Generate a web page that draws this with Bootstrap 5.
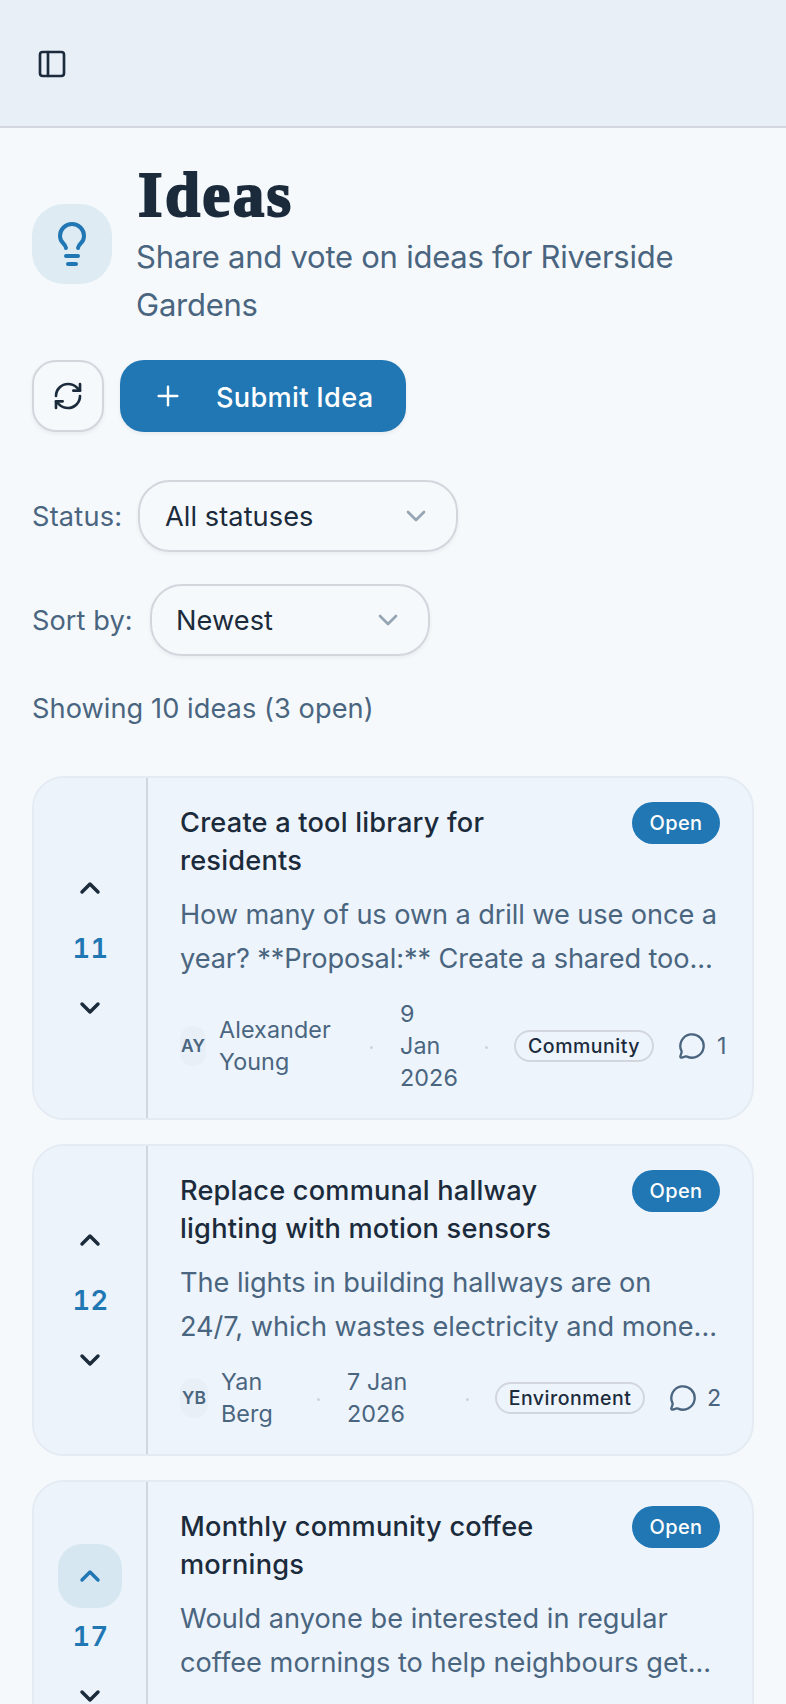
<!DOCTYPE html>
<html lang="en">
<head>
<meta charset="utf-8">
<meta name="viewport" content="width=device-width, initial-scale=1">
<title>Ideas</title>
<link href="https://cdn.jsdelivr.net/npm/bootstrap@5.3.0/dist/css/bootstrap.min.css" rel="stylesheet">
<style>
  :root{--ink:#1b2b3b;--soft:#4a657f;--brand:#2077b4;--line:#d3d6dd}
  html{overflow:hidden}
  body{font-family:Inter,"Liberation Sans",sans-serif;background:#f5f9fc;color:var(--ink);font-size:27.2px;line-height:40px;letter-spacing:.06px;height:1704px;overflow:hidden}
  svg{fill:none;stroke:currentColor;stroke-width:2;stroke-linecap:round;stroke-linejoin:round;flex:none;display:block;width:32px;height:32px}
  .topbar{height:128px;background:#e8eff7;border-bottom:2px solid var(--line);padding:2px 36px 0}
  .page{padding:32px;height:1576px;overflow:hidden}
  .soft{color:var(--soft)}
  .tile{width:80px;height:80px;border-radius:32px;background:#dfebf3;color:var(--brand)}
  .tile svg{width:48px;height:48px}
  .gap-lgx{gap:24px}
  h1{font:700 63px/70px "Liberation Serif",serif;letter-spacing:2.4px;-webkit-text-stroke:2px var(--ink);margin:0 0 2px 2px}
  .intro{font-size:31px;line-height:48px;letter-spacing:-.25px;margin:0 0 -1px;padding-top:1px}
  .actions{margin-top:32px;gap:16px}
  .ctl{height:72px;border-radius:24px;box-shadow:0 2px 4px rgba(0,0,0,.06)}
  .btn-refresh{width:72px;border:2px solid var(--line);background:#f5f9fc;color:var(--ink);padding:0}
  .btn-submit{width:286px;background:var(--brand);color:#fff;border:0;padding:0 0 0 32px;gap:32px;font-size:27.2px;font-weight:500;letter-spacing:.3px}
  .btn-submit svg{stroke-width:1.8}
  .picker{height:72px;border:2px solid var(--line);border-radius:32px;padding:0 24px;box-shadow:0 2px 4px rgba(0,0,0,.05)}
  .picker svg{color:#96a5b4}
  .picker span,.lbl,.lbl-sort{padding-top:2px}
  .pick-status{width:320px}
  .pick-status span{padding-left:1px}
  .pick-sort{width:280px}
  .lbl{width:90px;letter-spacing:.2px}
  .lbl-sort{width:102px}
  .filter-sort{margin-top:32px}
  .count{margin-top:33px;margin-bottom:-1px}
  .ideas{margin-top:48px;gap:24px}
  .idea{border:2px solid #e5ebf2;border-radius:32px;background:#edf4fb;overflow:hidden;flex:none}
  .votes{width:114px;flex:none;border-right:2px solid var(--line);gap:8px;background:#ecf3fa}
  .vote-btn{width:64px;height:64px;border-radius:24px;border:0;background:none;color:var(--ink);padding:0}
  .vote-btn svg{stroke-width:2.6}
  .vote-btn.voted{background:#d7e7f1;color:var(--brand)}
  .tally{color:var(--brand);font-weight:600;font-variant-numeric:tabular-nums;letter-spacing:.3px;padding:1px 0 0 1px;margin-bottom:-1px}
  .info{padding:24px 32px;flex:1 1 0;min-width:0}
  .info h2{font-size:27.2px;line-height:38px;font-weight:500;letter-spacing:.2px;margin:0;padding-top:2px;width:400px}
  .state{width:88px;height:42px;border-radius:21px;background:var(--brand);color:#fff;font-size:20px;font-weight:500;letter-spacing:.4px}
  .blurb{margin:13px -20px 17px 0;line-height:44px;letter-spacing:-.1px;white-space:nowrap}
  .b .blurb{letter-spacing:-.05px}
  .c .blurb{letter-spacing:.02px}
  .meta{font-size:23.3px;line-height:32px;letter-spacing:.1px;white-space:nowrap;margin-right:-30px}
  .initials{width:26px;height:40px;border-radius:20px;background:#e8eff7;font-size:17.4px;font-weight:600;margin-right:13px}
  .initials.wide{width:28px}
  .who{width:151px}
  .dot{width:3px;height:3px;border-radius:50%;background:#cdd4dc;margin-top:2px}
  .when{width:85px;margin-left:27px}
  .b .who{width:96px}
  .b .when{width:119px}
  .topic{height:32px;border:2px solid var(--line);border-radius:16px;width:140px;margin-left:26px;margin-right:24px;color:var(--ink);font-size:19.5px;font-weight:500;letter-spacing:.5px}
  .b .topic{width:150px}
  .meta svg{width:28px;height:28px;margin-right:11px}
  .b .meta svg{margin-right:10px}
</style>
</head>
<body>
<header class="topbar d-flex align-items-center">
  <svg viewBox="0 0 24 24"><rect x="3" y="3" width="18" height="18" rx="2"/><path d="M9 3v18"/></svg>
</header>
<main class="page">
  <div class="d-flex align-items-center gap-lgx">
    <div class="tile d-flex align-items-center justify-content-center">
      <svg viewBox="0 0 24 24"><path d="M15 14c.2-1 .7-1.7 1.5-2.5 1-.9 1.5-2.2 1.5-3.5A6 6 0 0 0 6 8c0 1 .2 2.2 1.5 3.5.7.7 1.3 1.5 1.5 2.5"/><path d="M9 18h6"/><path d="M10 22h4"/></svg>
    </div>
    <div>
      <h1>Ideas</h1>
      <p class="intro soft">Share and vote on ideas for Riverside<br>Gardens</p>
    </div>
  </div>
  <div class="actions d-flex">
    <button class="btn btn-refresh ctl d-flex align-items-center justify-content-center" aria-label="Refresh">
      <svg viewBox="0 0 24 24"><path d="M3 12a9 9 0 0 1 9-9 9.75 9.75 0 0 1 6.74 2.74L21 8"/><path d="M21 3v5h-5"/><path d="M21 12a9 9 0 0 1-9 9 9.75 9.75 0 0 1-6.74-2.74L3 16"/><path d="M8 16H3v5"/></svg>
    </button>
    <button class="btn btn-submit ctl d-flex align-items-center">
      <svg viewBox="0 0 24 24"><path d="M5 12h14"/><path d="M12 5v14"/></svg><span class="pt-1">Submit Idea</span>
    </button>
  </div>
  <div class="d-flex align-items-center mt-5 gap-3">
    <span class="soft lbl">Status:</span>
    <div class="picker pick-status d-flex align-items-center justify-content-between"><span>All statuses</span><svg viewBox="0 0 24 24"><path d="m6 9 6 6 6-6"/></svg></div>
  </div>
  <div class="filter-sort d-flex align-items-center gap-3">
    <span class="soft lbl-sort">Sort by:</span>
    <div class="picker pick-sort d-flex align-items-center justify-content-between"><span>Newest</span><svg viewBox="0 0 24 24"><path d="m6 9 6 6 6-6"/></svg></div>
  </div>
  <div class="count soft">Showing 10 ideas (3 open)</div>

  <div class="ideas d-flex flex-column">
    <article class="idea d-flex">
      <div class="votes d-flex flex-column align-items-center justify-content-center">
        <button class="vote-btn d-flex align-items-center justify-content-center" aria-label="Upvote"><svg viewBox="0 0 24 24"><path d="m18 15-6-6-6 6"/></svg></button>
        <span class="tally">11</span>
        <button class="vote-btn d-flex align-items-center justify-content-center" aria-label="Downvote"><svg viewBox="0 0 24 24"><path d="m6 9 6 6 6-6"/></svg></button>
      </div>
      <div class="info">
        <div class="d-flex justify-content-between">
          <h2>Create a tool library for<br>residents</h2>
          <span class="state d-flex align-items-center justify-content-center">Open</span>
        </div>
        <p class="blurb soft">How many of us own a drill we use once a<br>year? **Proposal:** Create a shared too...</p>
        <div class="meta soft d-flex align-items-center">
          <span class="initials d-flex align-items-center justify-content-center">AY</span>
          <span class="who">Alexander<br>Young</span><i class="dot"></i>
          <span class="when">9<br>Jan<br>2026</span><i class="dot"></i>
          <span class="topic d-flex align-items-center justify-content-center">Community</span>
          <svg viewBox="0 0 24 24"><path d="M2.992 16.342a2 2 0 0 1 .094 1.167l-1.065 3.29a1 1 0 0 0 1.236 1.168l3.413-.998a2 2 0 0 1 1.099.092 10 10 0 1 0-4.777-4.719"/></svg>1
        </div>
      </div>
    </article>

    <article class="idea b d-flex">
      <div class="votes d-flex flex-column align-items-center justify-content-center">
        <button class="vote-btn d-flex align-items-center justify-content-center" aria-label="Upvote"><svg viewBox="0 0 24 24"><path d="m18 15-6-6-6 6"/></svg></button>
        <span class="tally">12</span>
        <button class="vote-btn d-flex align-items-center justify-content-center" aria-label="Downvote"><svg viewBox="0 0 24 24"><path d="m6 9 6 6 6-6"/></svg></button>
      </div>
      <div class="info">
        <div class="d-flex justify-content-between">
          <h2>Replace communal hallway<br>lighting with motion sensors</h2>
          <span class="state d-flex align-items-center justify-content-center">Open</span>
        </div>
        <p class="blurb soft">The lights in building hallways are on<br>24/7, which wastes electricity and mone...</p>
        <div class="meta soft d-flex align-items-center">
          <span class="initials wide d-flex align-items-center justify-content-center">YB</span>
          <span class="who">Yan<br>Berg</span><i class="dot"></i>
          <span class="when">7 Jan<br>2026</span><i class="dot"></i>
          <span class="topic d-flex align-items-center justify-content-center">Environment</span>
          <svg viewBox="0 0 24 24"><path d="M2.992 16.342a2 2 0 0 1 .094 1.167l-1.065 3.29a1 1 0 0 0 1.236 1.168l3.413-.998a2 2 0 0 1 1.099.092 10 10 0 1 0-4.777-4.719"/></svg>2
        </div>
      </div>
    </article>

    <article class="idea c d-flex" style="height:312px">
      <div class="votes d-flex flex-column align-items-center justify-content-center">
        <button class="vote-btn voted d-flex align-items-center justify-content-center" aria-label="Upvote"><svg viewBox="0 0 24 24"><path d="m18 15-6-6-6 6"/></svg></button>
        <span class="tally">17</span>
        <button class="vote-btn d-flex align-items-center justify-content-center" aria-label="Downvote"><svg viewBox="0 0 24 24"><path d="m6 9 6 6 6-6"/></svg></button>
      </div>
      <div class="info">
        <div class="d-flex justify-content-between">
          <h2>Monthly community coffee<br>mornings</h2>
          <span class="state d-flex align-items-center justify-content-center">Open</span>
        </div>
        <p class="blurb soft">Would anyone be interested in regular<br>coffee mornings to help neighbours get...</p>
      </div>
    </article>
  </div>
</main>
<script src="https://cdn.jsdelivr.net/npm/bootstrap@5.3.0/dist/js/bootstrap.bundle.min.js"></script>
</body>
</html>
